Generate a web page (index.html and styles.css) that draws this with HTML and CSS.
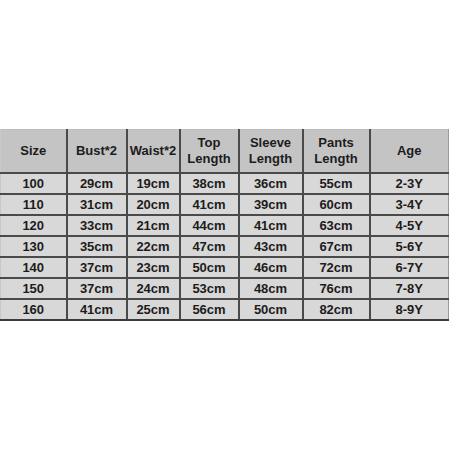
FILE: index.html
```html
<!DOCTYPE html>
<html>
<head>
<meta charset="utf-8">
<link rel="stylesheet" href="styles.css">
</head>
<body>
<div class="page">
<table class="sizes">
<colgroup>
<col class="c1"><col class="c2"><col class="c3"><col class="c4"><col class="c5"><col class="c6"><col class="c7">
</colgroup>
<thead>
<tr><th>Size</th><th>Bust*2</th><th>Waist*2</th><th>Top<br>Length</th><th>Sleeve<br>Length</th><th>Pants<br>Length</th><th>Age</th></tr>
</thead>
<tbody>
<tr><td>100</td><td>29cm</td><td>19cm</td><td>38cm</td><td>36cm</td><td>55cm</td><td>2-3Y</td></tr>
<tr><td>110</td><td>31cm</td><td>20cm</td><td>41cm</td><td>39cm</td><td>60cm</td><td>3-4Y</td></tr>
<tr><td>120</td><td>33cm</td><td>21cm</td><td>44cm</td><td>41cm</td><td>63cm</td><td>4-5Y</td></tr>
<tr><td>130</td><td>35cm</td><td>22cm</td><td>47cm</td><td>43cm</td><td>67cm</td><td>5-6Y</td></tr>
<tr><td>140</td><td>37cm</td><td>23cm</td><td>50cm</td><td>46cm</td><td>72cm</td><td>6-7Y</td></tr>
<tr><td>150</td><td>37cm</td><td>24cm</td><td>53cm</td><td>48cm</td><td>76cm</td><td>7-8Y</td></tr>
<tr><td>160</td><td>41cm</td><td>25cm</td><td>56cm</td><td>50cm</td><td>82cm</td><td>8-9Y</td></tr>
</tbody>
</table>
</div>
</body>
</html>
```
FILE: styles.css
```css
html, body {
  margin: 0;
  padding: 0;
  background: #ffffff;
}
.page {
  width: 450px;
  height: 450px;
  padding-top: 129px;
  box-sizing: border-box;
}
.sizes {
  width: 448px;
  border-collapse: collapse;
  table-layout: fixed;
  font-family: "Liberation Sans", Arial, sans-serif;
  font-weight: bold;
  font-size: 13px;
  color: #1c1c1c;
  border-top: 1px solid #bdbdbd;
  border-left: 1px solid #c8c8c8;
  border-right: 1px solid #9a9a9a;
  border-bottom: 2px solid #3c3c3c;
}
.c1 { width: 66px; }
.c2 { width: 60px; }
.c3 { width: 53px; }
.c4 { width: 59px; }
.c5 { width: 64px; }
.c6 { width: 67px; }
.c7 { width: 79px; }
.sizes th, .sizes td {
  padding: 0;
  text-align: center;
  vertical-align: middle;
  border-left: 2px solid #4a4a4a;
  border-bottom: 2px solid #4a4a4a;
}
.sizes th:first-child, .sizes td:first-child {
  border-left: 1px solid #c8c8c8;
}
.sizes th {
  background: #c4c4c4;
  height: 42px;
  line-height: 16px;
  font-weight: bold;
}
.sizes td {
  background: #d8d8d8;
  height: 19px;
  line-height: 15px;
}
.sizes tbody tr:last-child td {
  border-bottom: 2px solid #3c3c3c;
}
```
